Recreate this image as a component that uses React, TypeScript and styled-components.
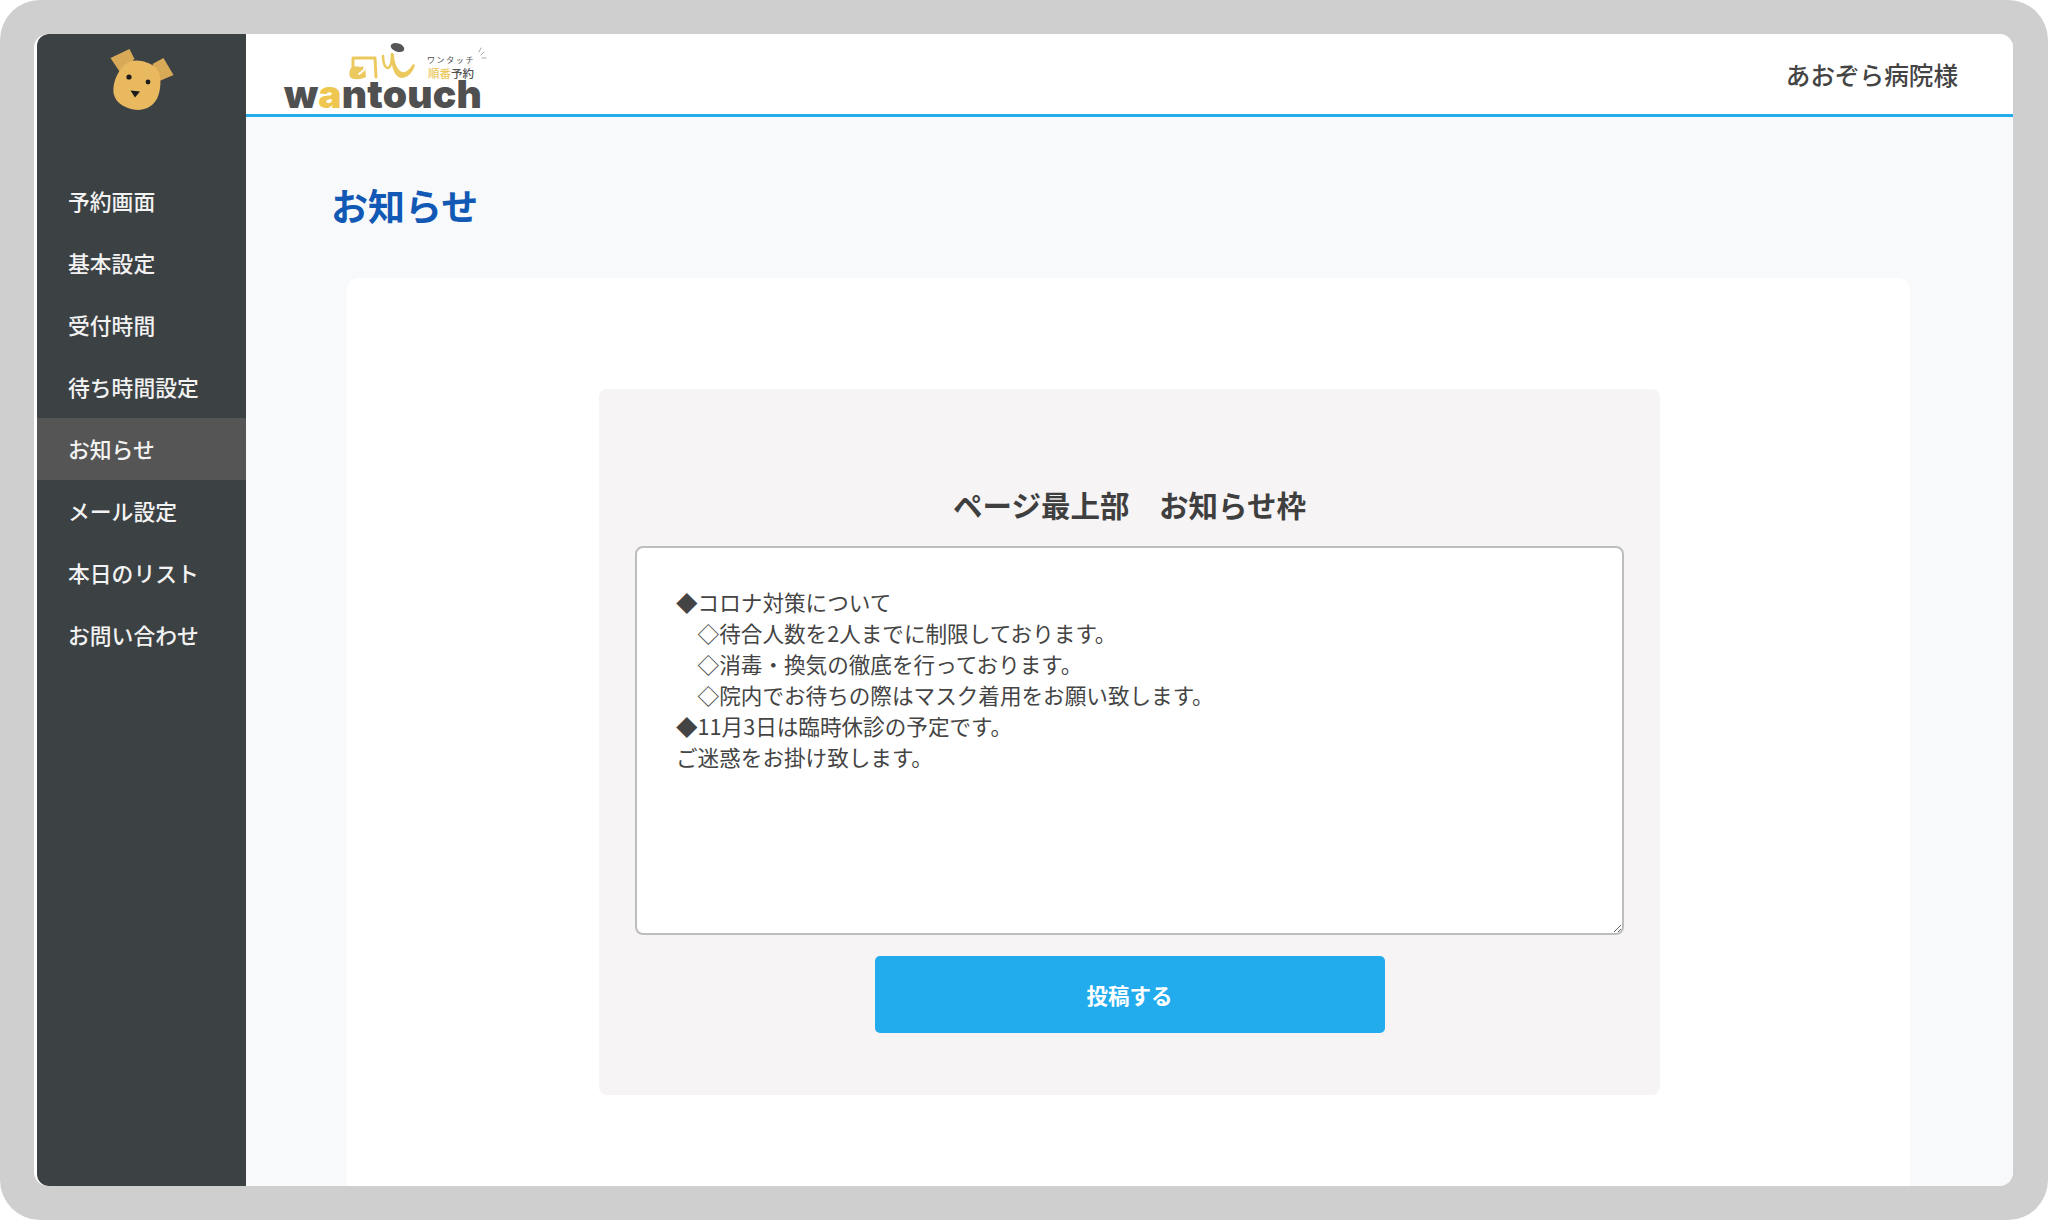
import styled, { createGlobalStyle } from "styled-components";

const GlobalStyle = createGlobalStyle`
  html, body {
    margin: 0;
    padding: 0;
    background: #ffffff;
  }

  * {
    box-sizing: border-box;
  }
`

const Frame = styled.div`
  width: 2048px;
  height: 1220px;
  padding: 34px 35px 34px 34px;
  background-color: #cfcfcf;
  border-radius: 40px;
  font-family: "Noto Sans CJK JP", "Noto Sans", sans-serif;
  color: #3d3d3d;
`

const Window = styled.div`
  display: flex;
  height: 100%;
  overflow: hidden;
  background-color: #ffffff;
  border-radius: 14px;
`

const Sidebar = styled.aside`
  flex: 0 0 209px;
  margin-left: 3px;
  background-color: #3c4144;
  border-radius: 12px 0 0 12px;
`

const DogWrapper = styled.div`
  display: flex;
  justify-content: center;
  height: 136px;
  padding-top: 13px;

  svg {
    width: 72px;
    height: 66px;
  }
`

const NavItem = styled.div<{ $active?: boolean }>`
  height: 62px;
  padding-left: 31px;
  font-size: 21.8px;
  font-weight: 500;
  line-height: 62px;
  color: #f2f2f2;
  background-color: ${(props) => (props.$active ? "#555555" : "transparent")};
`

const Content = styled.div`
  flex: 1;
  display: flex;
  flex-direction: column;
  min-width: 0;
  background-color: #f8f9fb;
`

const Header = styled.header`
  flex: 0 0 83px;
  display: flex;
  justify-content: space-between;
  align-items: center;
  padding: 0 55px 0 38px;
  background-color: #ffffff;
  border-bottom: 3px solid #22acee;
`

const Logo = styled.div`
  align-self: flex-start;
  width: 199px;
  color: #505050;
`

const LogoTop = styled.div`
  display: flex;
  align-items: flex-start;
  height: 40px;
  margin-top: 6px;
  padding-left: 63px;

  svg {
    flex: none;
  }
`

const LogoCaption = styled.div`
  flex: none;
  display: flex;
  flex-direction: column;
  align-items: center;
  margin: 16px 0 0 10px;
  line-height: 1;
  white-space: nowrap;
`

const LogoKana = styled.span`
  font-size: 8px;
  letter-spacing: 1.6px;
`

const LogoReserve = styled.span`
  margin-top: 4px;
  font-size: 11.5px;
  font-weight: 500;

  em {
    font-style: normal;
    color: #ecc95e;
  }
`

const LogoWord = styled.div`
  font-family: Inter, sans-serif;
  font-size: 39px;
  font-weight: 900;
  line-height: 28px;
  letter-spacing: 0.2px;
  white-space: nowrap;

  em {
    font-style: normal;
    color: #efc64f;
  }
`

const ClientName = styled.div`
  font-size: 24.6px;
  font-weight: 500;
  color: #444444;
`

const Main = styled.main`
  flex: 1;
  display: flex;
  flex-direction: column;
  min-height: 0;
  padding: 0 103px 0 85px;
`

const PageTitle = styled.h1`
  height: 161px;
  margin: 0;
  padding-top: 61px;
  font-size: 37px;
  font-weight: 700;
  line-height: 54px;
  color: #1259b5;
`

const Card = styled.section`
  flex: 1;
  margin-left: 16px;
  padding: 111px 0 0 252px;
  background-color: #ffffff;
  border-radius: 12px 12px 0 0;
`

const NoticePanel = styled.div`
  width: 1061px;
  padding: 92px 36px 62px;
  display: flex;
  flex-direction: column;
  align-items: center;
  background-color: #f6f4f5;
  border-radius: 8px;
`

const PanelTitle = styled.h2`
  margin: 0 0 18px;
  font-size: 29.5px;
  font-weight: 700;
  line-height: 47px;
  color: #3f3f3f;
`

const NoticeText = styled.textarea`
  width: 989px;
  height: 389px;
  padding: 38px 39px;
  font-family: inherit;
  font-size: 21.6px;
  line-height: 31px;
  color: #444444;
  background-color: #ffffff;
  border: 2px solid #bdbdbd;
  border-radius: 8px;
  outline: none;
  display: block;
`

const SubmitButton = styled.button`
  width: 510px;
  height: 77px;
  margin-top: 21px;
  font-family: inherit;
  font-size: 21.5px;
  font-weight: 700;
  color: #ffffff;
  background-color: #22acee;
  border: none;
  border-radius: 5px;
`

const menuItems = [
  "予約画面",
  "基本設定",
  "受付時間",
  "待ち時間設定",
  "お知らせ",
  "メール設定",
  "本日のリスト",
  "お問い合わせ",
]

const noticeBody = `◆コロナ対策について
　◇待合人数を2人までに制限しております。
　◇消毒・換気の徹底を行っております。
　◇院内でお待ちの際はマスク着用をお願い致します。
◆11月3日は臨時休診の予定です。
ご迷惑をお掛け致します。`

function DogFace() {
  return (
    <svg viewBox="18 17 67 66">
      <path d="M20 28 L39 19 L44 29 L30 43 Z" fill="#d8aa58" />
      <path d="M62 34 L73 28 L83 45 L69 51 Z" fill="#d8aa58" />
      <path
        d="M34 35 C43 27 56 31 65 37 C71 43 71 56 68 65 C65 75 56 80 47 80 C36 79 25 74 23 63 C22 52 27 42 34 35 Z"
        fill="#e8b95f"
      />
      <circle cx="38.5" cy="47" r="2.6" fill="#1c1c1c" />
      <circle cx="57.5" cy="52" r="2.4" fill="#1c1c1c" />
      <path d="M40 60.5 L49.5 61.5 L44.5 67.5 Z" fill="#1c1c1c" />
    </svg>
  )
}

function LogoMark() {
  return (
    <svg width="70" height="40" viewBox="348 40 70 40">
      <path
        d="M352 68 C354 66 358 66 361 67 L366 66 L367 77 C361 80 354 80 351 77 C350 74 350 71 352 68 Z"
        fill="#ecc95e"
      />
      <g fill="none" stroke="#ecc95e" strokeLinecap="round" strokeLinejoin="round">
        <path d="M354 67 V58 H376 L377 77" strokeWidth="3" />
        <path d="M362 62 H366 L365 70 L360 74" stroke="#ffffff" strokeWidth="2" />
        <path d="M384 56 C384 63 386 68 389 68 C392 67 393 60 393 54" strokeWidth="2.6" />
      </g>
      <path
        d="M392 54 L395 54 C395 62 398 70 403 72 C407 73 411 69 414 64 L416 65 C414 72 409 78 402 78 C396 77 392 68 392 54 Z"
        fill="#ecc95e"
      />
      <ellipse cx="398.5" cy="47.5" rx="7" ry="4.2" transform="rotate(18 398.5 47.5)" fill="#565656" />
    </svg>
  )
}

function LogoSpark() {
  return (
    <svg width="12" height="30" viewBox="0 0 12 30">
      <g stroke="#a8a8a8" strokeWidth="1" strokeLinecap="round">
        <path d="M6 8 L4 12" />
        <path d="M9 12 L6 15" />
        <path d="M11 18 L7 18" />
      </g>
    </svg>
  )
}

export default function App(): JSX.Element {
  return (
    <Frame>
      <GlobalStyle />
      <Window>
        <Sidebar>
          <DogWrapper>
            <DogFace />
          </DogWrapper>
          <nav>
            {menuItems.map((item) => (
              <NavItem key={item} $active={item === "お知らせ"}>
                {item}
              </NavItem>
            ))}
          </nav>
        </Sidebar>
        <Content>
          <Header>
            <Logo>
              <LogoTop>
                <LogoMark />
                <LogoCaption>
                  <LogoKana>ワンタッチ</LogoKana>
                  <LogoReserve>
                    <em>順番</em>予約
                  </LogoReserve>
                </LogoCaption>
                <LogoSpark />
              </LogoTop>
              <LogoWord>
                w<em>a</em>ntouch
              </LogoWord>
            </Logo>
            <ClientName>あおぞら病院様</ClientName>
          </Header>
          <Main>
            <PageTitle>お知らせ</PageTitle>
            <Card>
              <NoticePanel>
                <PanelTitle>ページ最上部　お知らせ枠</PanelTitle>
                <NoticeText defaultValue={noticeBody} />
                <SubmitButton>投稿する</SubmitButton>
              </NoticePanel>
            </Card>
          </Main>
        </Content>
      </Window>
    </Frame>
  )
}
